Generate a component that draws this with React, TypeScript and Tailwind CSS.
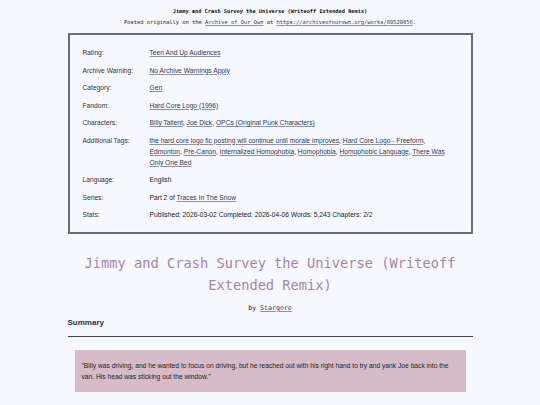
import React from 'react';

const A: React.FC<{ children: React.ReactNode }> = ({ children }) => (
  <a className="text-[#2c3850] underline decoration-[#8a93a6] underline-offset-1">{children}</a>
);

const rows: { label: string; value: React.ReactNode }[] = [
  { label: 'Rating:', value: <A>Teen And Up Audiences</A> },
  { label: 'Archive Warning:', value: <A>No Archive Warnings Apply</A> },
  { label: 'Category:', value: <A>Gen</A> },
  { label: 'Fandom:', value: <A>Hard Core Logo (1996)</A> },
  {
    label: 'Characters:',
    value: (
      <>
        <A>Billy Tallent</A>, <A>Joe Dick</A>, <A>OPCs (Original Punk Characters)</A>
      </>
    ),
  },
  {
    label: 'Additional Tags:',
    value: (
      <>
        <A>the hard core logo fic posting will continue until morale improves</A>, <A>Hard Core Logo - Freeform</A>,{' '}
        <A>Edmonton</A>, <A>Pre-Canon</A>, <A>Internalized Homophobia</A>, <A>Homophobia</A>,{' '}
        <A>Homophobic Language</A>, <A>There Was Only One Bed</A>
      </>
    ),
  },
  { label: 'Language:', value: 'English' },
  { label: 'Series:', value: <>Part 2 of <A>Traces In The Snow</A></> },
  { label: 'Stats:', value: 'Published: 2026-03-02 Completed: 2026-04-06 Words: 5,243 Chapters: 2/2' },
];

export default function App() {
  return (
    <div className="min-h-[405px] w-[540px] bg-[#f7f8fe] text-[#222]">
      <div className="mx-auto w-[405px] pt-[7px]">
        <div className="text-center font-['DejaVu_Sans_Mono',monospace] text-[5.3px] font-bold leading-[8px] text-[#111]">
          Jimmy and Crash Survey the Universe (Writeoff Extended Remix)
        </div>
        <div className="mt-[3px] text-center font-['DejaVu_Sans_Mono',monospace] text-[5.4px] leading-[8px] text-[#222]">
          Posted originally on the <A>Archive of Our Own</A> at <A>https://archiveofourown.org/works/80520856</A>.
        </div>

        <div className="mt-[7px] flex flex-col gap-[6.5px] border-2 border-[#646d7d] px-[13px] pt-[12px] pb-[11.5px] font-['Liberation_Sans',Arial,sans-serif] text-[6.7px] leading-[11px]">
          {rows.map((r) => (
            <div key={r.label} className="flex">
              <div className="w-[67px] shrink-0 text-[#333]">{r.label}</div>
              <div className="flex-1 pr-[10px]">{r.value}</div>
            </div>
          ))}
        </div>

        <h1 className="mt-[19.5px] text-center font-['DejaVu_Sans_Mono',monospace] text-[13.7px] leading-[21.7px] text-[#a486a7]">
          Jimmy and Crash Survey the Universe (Writeoff Extended Remix)
        </h1>
        <div className="mt-[6.4px] text-center font-['DejaVu_Sans_Mono',monospace] text-[6.6px] leading-[10px] text-[#222]">
          by <A>Stargore</A>
        </div>

        <div className="mt-[4.5px] border-b-[1.5px] border-[#3d4656] pb-[8px] font-['Liberation_Sans',Arial,sans-serif] text-[8px] font-bold leading-[11px] text-[#2a3447]">
          Summary
        </div>

        <div className="mx-[7px] mt-[13px] bg-[#d8bbc8] px-[7px] pt-[9.5px] pb-[10px] font-['Liberation_Sans',Arial,sans-serif] text-[6.7px] leading-[11px] text-[#222]">
          "Billy was driving, and he wanted to focus on driving, but he reached out with his right hand to try and yank Joe
          back into the van. His head was sticking out the window."
        </div>
      </div>
    </div>
  );
}
